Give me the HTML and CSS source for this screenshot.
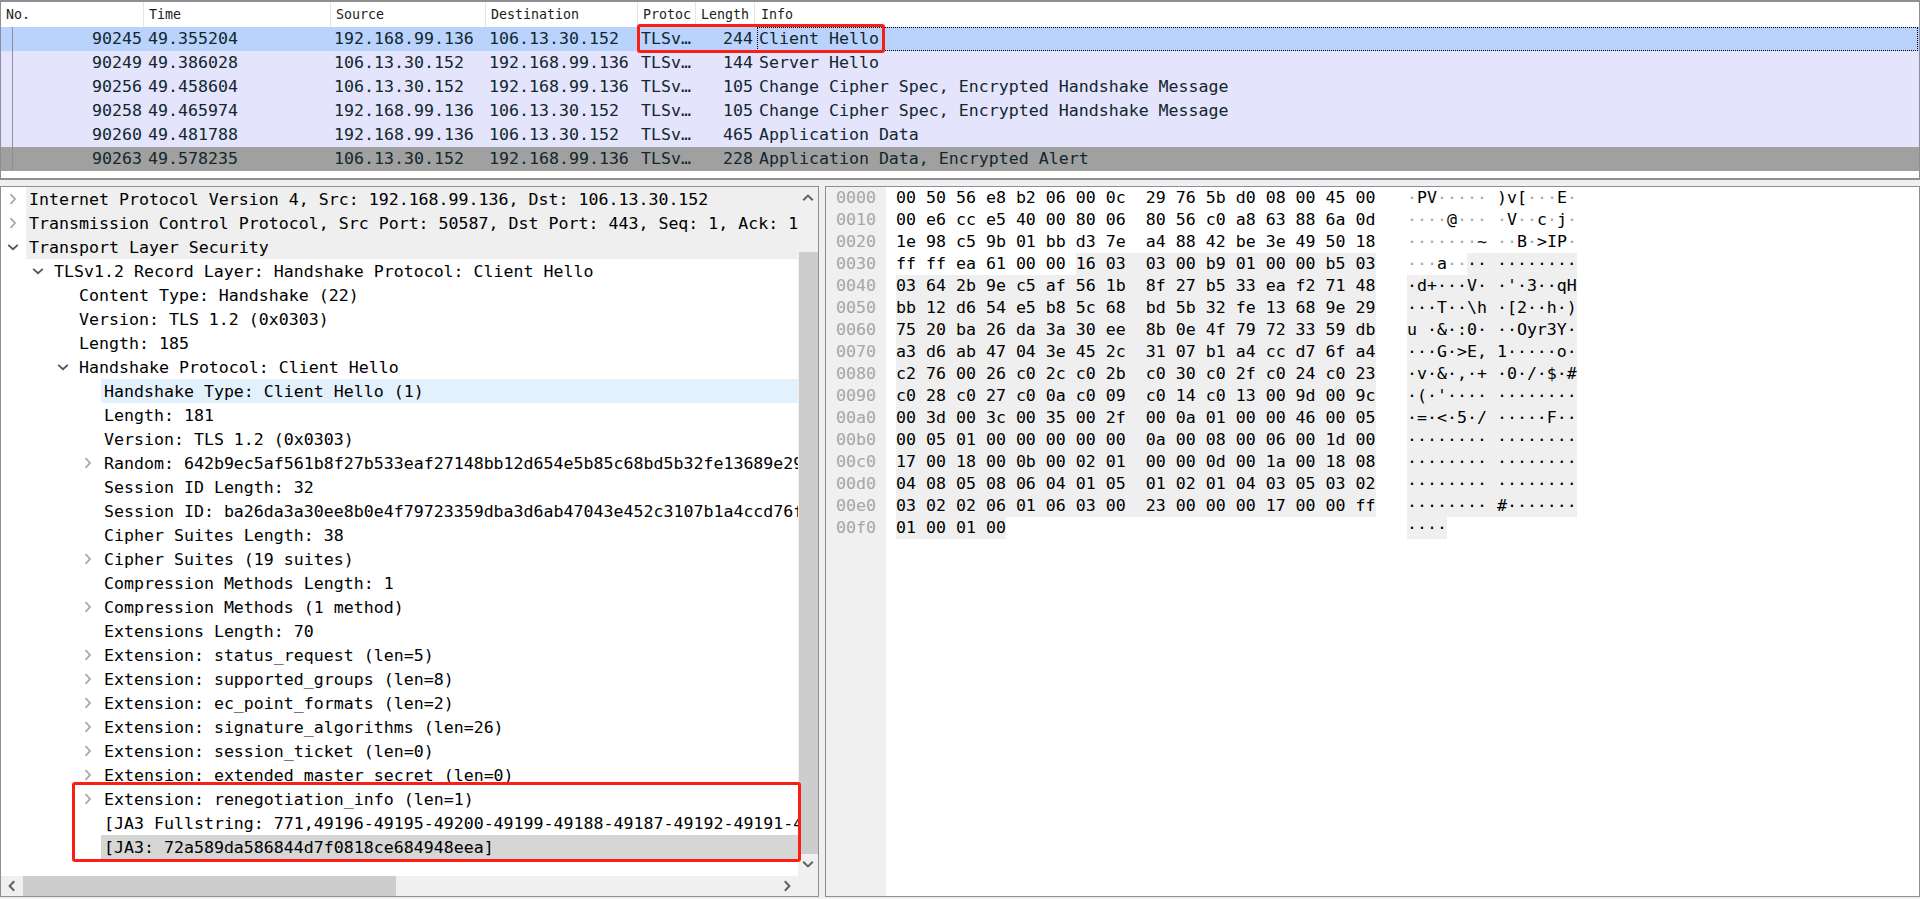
FILE: index.html
```html
<!DOCTYPE html>
<html lang="en">
<head>
<meta charset="utf-8">
<title>Wireshark TLS capture</title>
<link rel="stylesheet" href="styles.css">
</head>
<body>
<svg class="defs" aria-hidden="true">
  <symbol id="closed" viewBox="0 0 12 12"><path d="M3.5 1.2 8 6 3.5 10.8" fill="none" stroke="currentColor" stroke-width="1.8"/></symbol>
  <symbol id="open" viewBox="0 0 12 12"><path d="M1.2 3.8 6 8.2 10.8 3.8" fill="none" stroke="currentColor" stroke-width="1.8"/></symbol>
  <symbol id="up" viewBox="0 0 12 12"><path d="M1.2 8.2 6 3.6 10.8 8.2" fill="none" stroke="currentColor" stroke-width="2"/></symbol>
  <symbol id="left" viewBox="0 0 12 12"><path d="M8.2 1.2 3.6 6 8.2 10.8" fill="none" stroke="currentColor" stroke-width="2"/></symbol>
</svg>
<main class="app">
  <section class="packets">
    <div class="phead">
      <span>No.</span><span>Time</span><span>Source</span><span>Destination</span><span>Protoc</span><span>Length</span><span>Info</span>
    </div>
    <div class="prow selected">
      <span class="no">90245</span><span class="time">49.355204</span><span>192.168.99.136</span><span>106.13.30.152</span><span>TLSv…</span><span class="len">244</span><span class="info focus">Client Hello</span>
    </div>
    <div class="prow tls">
      <span class="no">90249</span><span class="time">49.386028</span><span>106.13.30.152</span><span>192.168.99.136</span><span>TLSv…</span><span class="len">144</span><span class="info">Server Hello</span>
    </div>
    <div class="prow tls">
      <span class="no">90256</span><span class="time">49.458604</span><span>106.13.30.152</span><span>192.168.99.136</span><span>TLSv…</span><span class="len">105</span><span class="info">Change Cipher Spec, Encrypted Handshake Message</span>
    </div>
    <div class="prow tls">
      <span class="no">90258</span><span class="time">49.465974</span><span>192.168.99.136</span><span>106.13.30.152</span><span>TLSv…</span><span class="len">105</span><span class="info">Change Cipher Spec, Encrypted Handshake Message</span>
    </div>
    <div class="prow tls">
      <span class="no">90260</span><span class="time">49.481788</span><span>192.168.99.136</span><span>106.13.30.152</span><span>TLSv…</span><span class="len">465</span><span class="info">Application Data</span>
    </div>
    <div class="prow dark">
      <span class="no">90263</span><span class="time">49.578235</span><span>106.13.30.152</span><span>192.168.99.136</span><span>TLSv…</span><span class="len">228</span><span class="info">Application Data, Encrypted Alert</span>
    </div>
  </section>

  <div class="lower">
    <section class="details">
      <div class="details-main">
        <div class="tree">
          <div class="node d0 proto"><svg class="tw shut"><use href="#closed"/></svg><span class="lbl">Internet Protocol Version 4, Src: 192.168.99.136, Dst: 106.13.30.152</span></div>
          <div class="node d0 proto"><svg class="tw shut"><use href="#closed"/></svg><span class="lbl">Transmission Control Protocol, Src Port: 50587, Dst Port: 443, Seq: 1, Ack: 1, Len: 190</span></div>
          <div class="node d0 proto"><svg class="tw ex"><use href="#open"/></svg><span class="lbl">Transport Layer Security</span></div>
          <div class="node d1"><svg class="tw ex"><use href="#open"/></svg><span class="lbl">TLSv1.2 Record Layer: Handshake Protocol: Client Hello</span></div>
          <div class="node d2"><span class="tw"></span><span class="lbl">Content Type: Handshake (22)</span></div>
          <div class="node d2"><span class="tw"></span><span class="lbl">Version: TLS 1.2 (0x0303)</span></div>
          <div class="node d2"><span class="tw"></span><span class="lbl">Length: 185</span></div>
          <div class="node d2"><svg class="tw ex"><use href="#open"/></svg><span class="lbl">Handshake Protocol: Client Hello</span></div>
          <div class="node d3 related"><span class="tw"></span><span class="lbl">Handshake Type: Client Hello (1)</span></div>
          <div class="node d3"><span class="tw"></span><span class="lbl">Length: 181</span></div>
          <div class="node d3"><span class="tw"></span><span class="lbl">Version: TLS 1.2 (0x0303)</span></div>
          <div class="node d3"><svg class="tw shut"><use href="#closed"/></svg><span class="lbl">Random: 642b9ec5af561b8f27b533eaf27148bb12d654e5b85c68bd5b32fe13689e2975</span></div>
          <div class="node d3"><span class="tw"></span><span class="lbl">Session ID Length: 32</span></div>
          <div class="node d3"><span class="tw"></span><span class="lbl">Session ID: ba26da3a30ee8b0e4f79723359dba3d6ab47043e452c3107b1a4ccd76fa4c276</span></div>
          <div class="node d3"><span class="tw"></span><span class="lbl">Cipher Suites Length: 38</span></div>
          <div class="node d3"><svg class="tw shut"><use href="#closed"/></svg><span class="lbl">Cipher Suites (19 suites)</span></div>
          <div class="node d3"><span class="tw"></span><span class="lbl">Compression Methods Length: 1</span></div>
          <div class="node d3"><svg class="tw shut"><use href="#closed"/></svg><span class="lbl">Compression Methods (1 method)</span></div>
          <div class="node d3"><span class="tw"></span><span class="lbl">Extensions Length: 70</span></div>
          <div class="node d3"><svg class="tw shut"><use href="#closed"/></svg><span class="lbl">Extension: status_request (len=5)</span></div>
          <div class="node d3"><svg class="tw shut"><use href="#closed"/></svg><span class="lbl">Extension: supported_groups (len=8)</span></div>
          <div class="node d3"><svg class="tw shut"><use href="#closed"/></svg><span class="lbl">Extension: ec_point_formats (len=2)</span></div>
          <div class="node d3"><svg class="tw shut"><use href="#closed"/></svg><span class="lbl">Extension: signature_algorithms (len=26)</span></div>
          <div class="node d3"><svg class="tw shut"><use href="#closed"/></svg><span class="lbl">Extension: session_ticket (len=0)</span></div>
          <div class="node d3"><svg class="tw shut"><use href="#closed"/></svg><span class="lbl">Extension: extended_master_secret (len=0)</span></div>
          <div class="node d3"><svg class="tw shut"><use href="#closed"/></svg><span class="lbl">Extension: renegotiation_info (len=1)</span></div>
          <div class="node d3"><span class="tw"></span><span class="lbl">[JA3 Fullstring: 771,49196-49195-49200-49199-49188-49187-49192-49191-49162-49161</span></div>
          <div class="node d3 current"><span class="tw"></span><span class="lbl">[JA3: 72a589da586844d7f0818ce684948eea]</span></div>
        </div>
        <div class="vscroll">
          <svg class="arrow"><use href="#up"/></svg>
          <div class="vthumb"></div>
          <svg class="arrow down"><use href="#up"/></svg>
        </div>
      </div>
      <div class="hscroll">
        <svg class="arrow"><use href="#left"/></svg>
        <div class="hthumb"></div>
        <svg class="arrow flip"><use href="#left"/></svg>
        <div class="corner"></div>
      </div>
    </section>

    <section class="bytes">
      <div class="offsets">
        <div>0000</div><div>0010</div><div>0020</div><div>0030</div><div>0040</div><div>0050</div><div>0060</div><div>0070</div><div>0080</div><div>0090</div><div>00a0</div><div>00b0</div><div>00c0</div><div>00d0</div><div>00e0</div><div>00f0</div>
      </div>
      <div class="hexcol">
        <div>00 50 56 e8 b2 06 00 0c  29 76 5b d0 08 00 45 00</div>
        <div>00 e6 cc e5 40 00 80 06  80 56 c0 a8 63 88 6a 0d</div>
        <div>1e 98 c5 9b 01 bb d3 7e  a4 88 42 be 3e 49 50 18</div>
        <div>ff ff ea 61 00 00 <b>16 03  03 00 b9 01 00 00 b5 03</b></div>
        <div><b>03 64 2b 9e c5 af 56 1b  8f 27 b5 33 ea f2 71 48</b></div>
        <div><b>bb 12 d6 54 e5 b8 5c 68  bd 5b 32 fe 13 68 9e 29</b></div>
        <div><b>75 20 ba 26 da 3a 30 ee  8b 0e 4f 79 72 33 59 db</b></div>
        <div><b>a3 d6 ab 47 04 3e 45 2c  31 07 b1 a4 cc d7 6f a4</b></div>
        <div><b>c2 76 00 26 c0 2c c0 2b  c0 30 c0 2f c0 24 c0 23</b></div>
        <div><b>c0 28 c0 27 c0 0a c0 09  c0 14 c0 13 00 9d 00 9c</b></div>
        <div><b>00 3d 00 3c 00 35 00 2f  00 0a 01 00 00 46 00 05</b></div>
        <div><b>00 05 01 00 00 00 00 00  0a 00 08 00 06 00 1d 00</b></div>
        <div><b>17 00 18 00 0b 00 02 01  00 00 0d 00 1a 00 18 08</b></div>
        <div><b>04 08 05 08 06 04 01 05  01 02 01 04 03 05 03 02</b></div>
        <div><b>03 02 02 06 01 06 03 00  23 00 00 00 17 00 00 ff</b></div>
        <div><b>01 00 01 00</b></div>
      </div>
      <div class="asccol">
        <div><i>·</i>PV<i>·····</i> )v[<i>···</i>E<i>·</i></div>
        <div><i>····</i>@<i>···</i> <i>·</i>V<i>··</i>c<i>·</i>j<i>·</i></div>
        <div><i>·······</i>~ <i>··</i>B<i>·</i>&gt;IP<i>·</i></div>
        <div><i>···</i>a<i>··</i><b>·· ········</b></div>
        <div><b>·d+···V· ·'·3··qH</b></div>
        <div><b>···T··\h ·[2··h·)</b></div>
        <div><b>u ·&amp;·:0· ··Oyr3Y·</b></div>
        <div><b>···G·&gt;E, 1·····o·</b></div>
        <div><b>·v·&amp;·,·+ ·0·/·$·#</b></div>
        <div><b>·(·'···· ········</b></div>
        <div><b>·=·&lt;·5·/ ·····F··</b></div>
        <div><b>········ ········</b></div>
        <div><b>········ ········</b></div>
        <div><b>········ ········</b></div>
        <div><b>········ #·······</b></div>
        <div><b>····</b></div>
      </div>
    </section>
  </div>
</main>
<div class="mark mark-list"></div>
<div class="mark mark-tree"></div>
</body>
</html>
```
FILE: styles.css
```css
* { box-sizing: border-box; }
html, body { margin: 0; padding: 0; height: 100%; overflow: hidden; }
body {
  background: #f0f0f0;
  font-family: "DejaVu Sans Mono", "Liberation Mono", monospace;
  font-size: 16.6px;
  color: #000;
  position: relative;
}
.defs { position: absolute; width: 0; height: 0; }
.app { display: flex; flex-direction: column; gap: 6px; height: 897px; }

/* packet list */
.packets {
  height: 180px;
  flex: none;
  background: #fff;
  border: 1px solid #8e8e96;
  border-top-width: 2px;
  border-bottom-width: 2px;
  overflow: hidden;
}
.phead, .prow {
  display: grid;
  grid-template-columns: 143px 187px 155px 152px 58px 59px 1fr;
}
.phead {
  height: 25px;
  line-height: 26px;
  font-size: 13.3px;
  color: #222;
}
.phead span {
  padding-left: 5px;
  border-right: 1px solid #e6e6e6;
  overflow: hidden;
  white-space: nowrap;
}
.phead span:last-child { border-right: 0; padding-left: 6px; }
.prow { height: 24px; line-height: 23px; color: #12272e; white-space: pre; }
.prow span { padding-left: 3px; overflow: hidden; }
.prow .time { padding-left: 4px; }
.prow .no, .prow .len { text-align: right; padding: 0 2px 0 0; }
.prow .no { margin-left: 11px; border-left: 1px solid #8e8e96; }
.prow .info { padding-left: 4px; }
.prow .focus {
  margin: 0 1px 0 2px;
  padding-left: 1px;
  border: 1px dotted #000;
  line-height: 21px;
}
.selected { background: #bad3fd; }
.tls { background: #e4e4fc; }
.dark { background: #a0a0a0; }

/* lower panes */
.lower { flex: 1; display: flex; gap: 6px; min-height: 0; }
.details {
  width: 819px;
  flex: none;
  background: #fff;
  border: 1px solid #8e8e96;
  display: flex;
  flex-direction: column;
}
.details-main { flex: 1; display: flex; min-height: 0; }
.tree { flex: 1; min-width: 0; overflow: hidden; }
.node { display: flex; height: 24px; line-height: 23px; white-space: pre; }
.d1 { padding-left: 25px; }
.d2 { padding-left: 50px; }
.d3 { padding-left: 75px; }
.tw { width: 25px; height: 24px; flex: none; padding: 0; }
svg.tw { padding: 6px 7px 6px 6px; }
.shut { color: #a8a8a8; }
.ex { color: #555; }
.lbl { flex: 1; min-width: 0; padding: 1px 0 0 3px; overflow: hidden; }
.proto .lbl { background: #efefef; }
.related .lbl { background: #e3f1fc; }
.current .lbl { background: #d6d6d6; }

/* scrollbars */
.vscroll {
  width: 20px;
  flex: none;
  background: #f0f0f0;
  display: flex;
  flex-direction: column;
  align-items: center;
}
.arrow { width: 12px; height: 12px; flex: none; color: #606060; }
.vscroll .arrow { margin: 5px 0 0; }
.vthumb { width: 19px; height: 602px; margin-top: 48px; background: #cdcdcd; flex: none; }
.vscroll .down { transform: rotate(180deg); margin-top: 4px; }
.hscroll {
  height: 20px;
  flex: none;
  background: #f0f0f0;
  display: flex;
  align-items: center;
}
.hscroll .arrow { margin: 0 5px; }
.hthumb { width: 373px; height: 100%; background: #cdcdcd; margin-right: 380px; flex: none; }
.hscroll .flip { transform: rotate(180deg); }
.corner { flex: 1; height: 100%; background: #f0f0f0; }

/* bytes pane */
.bytes {
  flex: 1;
  min-width: 0;
  background: #fff;
  border: 1px solid #8e8e96;
  display: flex;
  line-height: 22px;
}
.offsets { width: 60px; flex: none; background: #f0f0f0; padding-left: 10px; color: #a6a6a6; }
.hexcol { width: 480px; margin-left: 10px; flex: none; }
.asccol { margin-left: 31px; flex: none; }
.hexcol div, .asccol div, .offsets div { height: 22px; white-space: pre; }
.bytes b { font-weight: normal; display: inline-block; height: 22px; background: #efefef; }
.bytes i { font-style: normal; color: #a8a8a8; }

/* annotations drawn over the capture */
.mark {
  position: absolute;
  border: 3px solid #fa1e14;
  border-radius: 3px;
  pointer-events: none;
}
.mark-list { left: 637px; top: 24px; width: 248px; height: 29px; }
.mark-tree { left: 72px; top: 782px; width: 729px; height: 80px; }
```
